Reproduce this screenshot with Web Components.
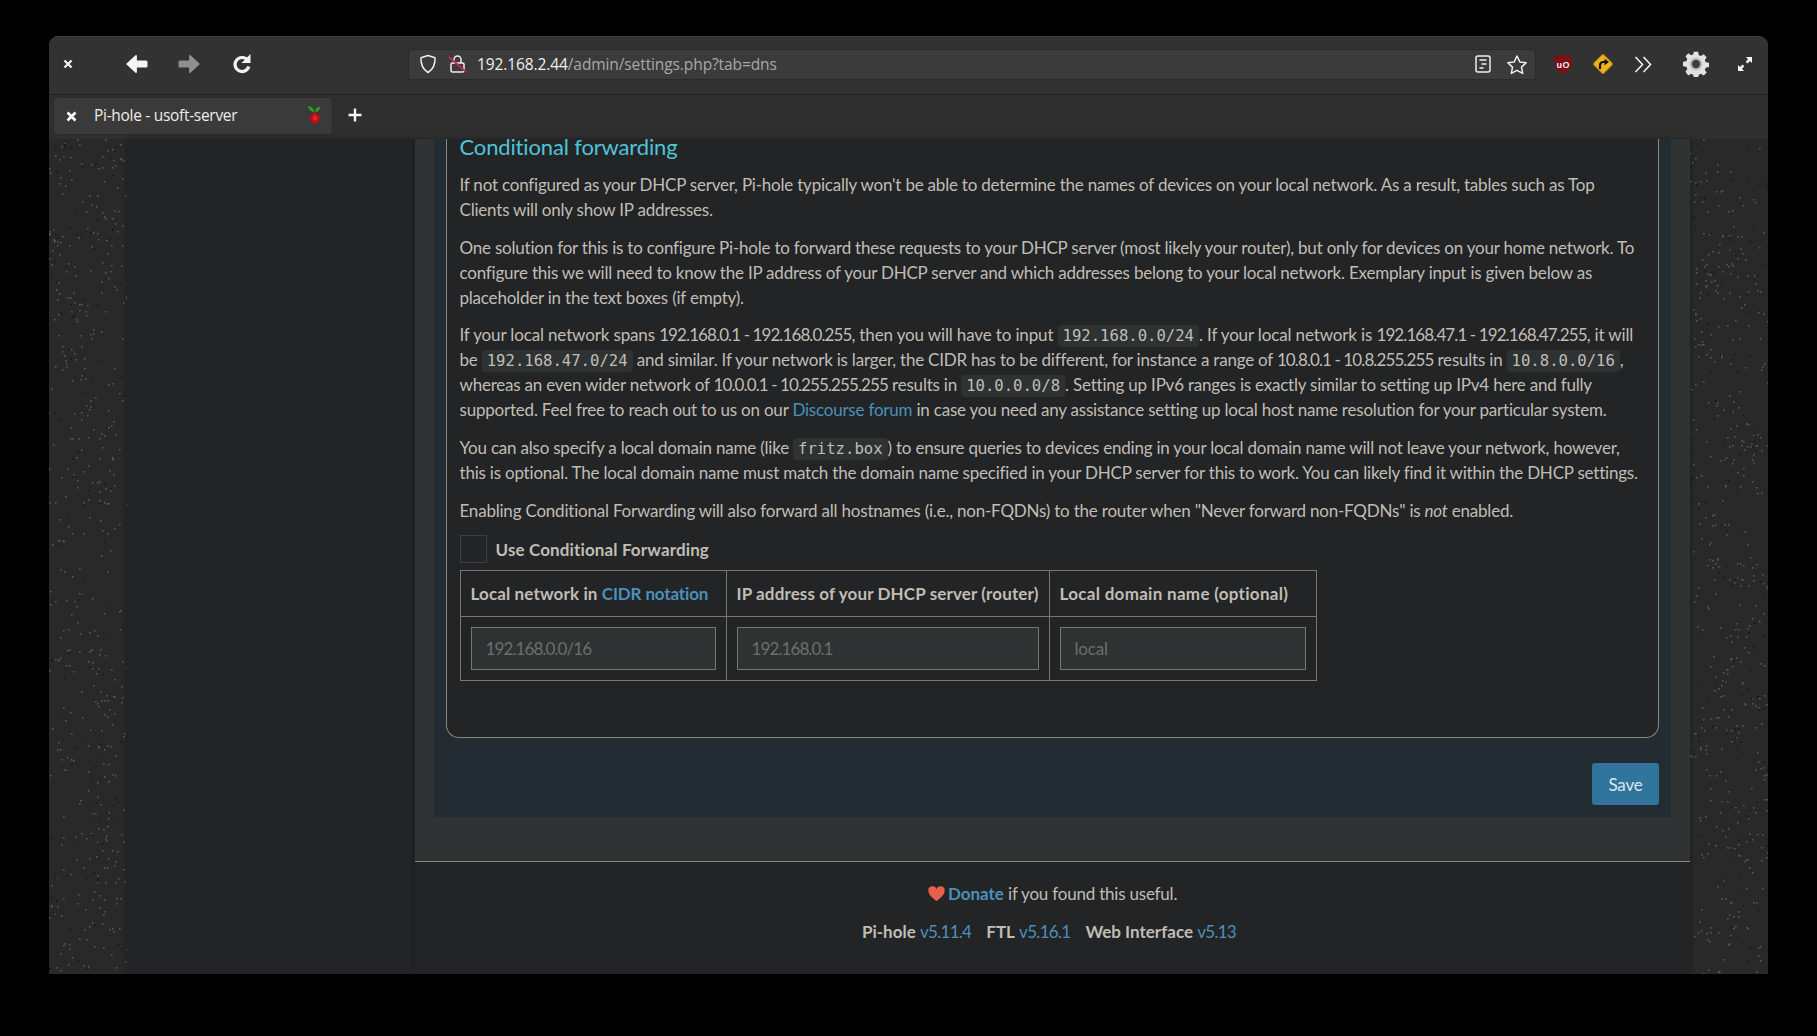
<!DOCTYPE html>
<html>
<head>
<meta charset="utf-8">
<title>Pi-hole - usoft-server</title>
<style>
  html, body { margin: 0; height: 100%; background: #000; overflow: hidden; }
  body { padding: 36px 49px 0; box-sizing: border-box; }
</style>
</head>
<body>
<browser-window>
  <browser-toolbar slot="toolbar" host="192.168.2.44" path="/admin/settings.php?tab=dns"></browser-toolbar>
  <browser-tabs slot="tabs" title="Pi-hole - usoft-server"></browser-tabs>
  <admin-page></admin-page>
</browser-window>

<template id="window-tpl">
  <style>
    :host { display: flex; flex-direction: column; width: 1719px; height: 938px; border-radius: 9px 9px 0 0; overflow: hidden; background: #232425; }
    .view { flex: 1; min-height: 0; display: flex; }
  </style>
  <slot name="toolbar"></slot>
  <slot name="tabs"></slot>
  <div class="view"><slot></slot></div>
</template>

<template id="toolbar-tpl">
  <style>
    :host { display: flex; align-items: center; flex: none; background: #323232; border-bottom: 1px solid #232323; border-top: 1px solid #3d3d3d; box-sizing: content-box; height: 54px; padding: 0 0 3px 14px; font: 15.5px "Open Sans", sans-serif; }
    svg { display: block; flex: none; }
    .url { width: 1128px; height: 31px; flex: none; display: flex; align-items: center; background: #3b3b3b; border: 1px solid #2a2a2a; border-radius: 4px; box-sizing: border-box; color: #a8a8a8; white-space: nowrap; }
    .url b { font-weight: 400; color: #f0f0f0; }
    .txt { flex: 1; letter-spacing: -.1px; }
  </style>
  <svg width="10" height="10" viewBox="0 0 10 10"><path d="M1.500 1.500l7 7M8.500 1.500l-7 7" stroke="#f2f2f2" stroke-width="2.200"/></svg>
  <svg width="23" height="20" viewBox="0 0 23 20" style="margin-left:52px"><path d="M1 10 10.500 1.200q1.200-.8 1.400.8V6.500H21q1.500 0 1.500 1.500v4q0 1.500-1.500 1.500H11.900V18q-.2 1.600-1.400.8Z" fill="#f4f4f4"/></svg>
  <svg width="23" height="20" viewBox="0 0 23 20" style="margin-left:30px"><path d="M22 10 12.500 1.200q-1.200-.8-1.400.8V6.500H2Q.5 6.500.5 8v4q0 1.500 1.500 1.500h9.100V18q.2 1.600 1.400.8Z" fill="#8f8f8f"/></svg>
  <svg width="20" height="20" viewBox="0 0 20 20" style="margin-left:31px"><path d="M15.600 6.200A7 7 0 1 0 16.800 12.500" fill="none" stroke="#f4f4f4" stroke-width="3.200"/><path d="M18.500 0v9h-9Z" fill="#f4f4f4"/></svg>
  <div class="url" style="margin-left:156px">
    <svg width="18" height="20" viewBox="0 0 18 20" style="margin-left:10px"><path d="M9 1.500 16 3.700c.3 6.500-1.600 11.500-7 14.800C3.600 15.200 1.700 10.200 2 3.700Z" fill="none" stroke="#eee" stroke-width="1.500" stroke-linejoin="round"/></svg>
    <svg width="19" height="20" viewBox="0 0 19 20" style="margin-left:11px"><path d="M6 9V5.500a3.500 3.500 0 0 1 7 0V9" fill="none" stroke="#eee" stroke-width="1.500"/><rect x="3" y="9" width="13" height="9" rx="1.500" fill="none" stroke="#eee" stroke-width="1.500"/><path d="M1 3 18 18" stroke="#c4294f" stroke-width="1.800"/></svg>
    <span class="txt" style="margin-left:10px"><b>192.168.2.44</b><span id="path"></span></span>
    <svg width="18" height="20" viewBox="0 0 18 20" style="margin-right:14px"><rect x="2" y="2" width="14" height="16" rx="2" fill="none" stroke="#eee" stroke-width="1.500"/><path d="M5.500 6h7M7.500 10h5M5.500 14h4" stroke="#eee" stroke-width="1.500"/></svg>
    <svg width="22" height="21" viewBox="0 0 22 21" style="margin-right:7px"><path d="M11 2l2.800 5.900 6.400.8-4.700 4.400 1.200 6.300L11 16.300l-5.700 3.100 1.200-6.300L1.800 8.700l6.400-.8Z" fill="none" stroke="#eee" stroke-width="1.500" stroke-linejoin="round"/></svg>
  </div>
  <svg width="20" height="21" viewBox="0 0 20 21" style="margin-left:17px"><path d="M10 .5 19 3c.3 8-2.500 14-9 17.500C3.500 17 .7 11 1 3Z" fill="#7c0f14"/><text x="10" y="13.500" text-anchor="middle" font-family="Liberation Sans" font-weight="700" font-size="9" fill="#f6eaea" textLength="13">uO</text></svg>
  <svg width="22" height="22" viewBox="0 0 22 22" style="margin-left:19px"><rect x="4" y="4" width="14" height="14" rx="1.500" transform="rotate(45 11 11)" fill="#eeb420" stroke="#b98a12"/><path d="M8 16v-3.500q0-3.500 3.500-3.500H13" fill="none" stroke="#141414" stroke-width="2.200"/><path d="M12.500 5.800 17 9l-4.500 3.200Z" fill="#141414"/></svg>
  <svg width="18" height="17" viewBox="0 0 18 17" style="margin-left:20px"><path d="M1.500 1l7 7.500-7 7.500M9.500 1l7 7.500-7 7.500" fill="none" stroke="#efefef" stroke-width="1.600"/></svg>
  <svg width="26" height="26" viewBox="0 0 28 28" style="margin-left:31px"><path d="M11.700 1h4.600l.7 3.600 2.300 1 3-2 3.200 3.200-2 3 1 2.300 3.600.7v4.600l-3.600.7-1 2.300 2 3-3.200 3.200-3-2-2.300 1-.7 3.600h-4.600l-.7-3.600-2.300-1-3 2L2.600 22.400l2-3-1-2.300L0 16.400v-4.600l3.600-.7 1-2.300-2-3L5.800 2.600l3 2 2.300-1Z" fill="#e2e2e2" transform="translate(0 -.1)"/><circle cx="14" cy="14" r="7" fill="#bdbdbd"/><circle cx="14" cy="14" r="4.500" fill="#3f3f3f"/></svg>
  <svg width="16" height="16" viewBox="0 0 16 16" style="margin-left:28px"><path d="M9 1h6v6l-2-2-2.500 2.500-1.800-1.800L11 3.200ZM7 15H1V9l2 2 2.500-2.500 1.800 1.800L5 12.800Z" fill="#f4f4f4"/></svg>
</template>

<template id="tabs-tpl">
  <style>
    :host { display: flex; align-items: center; flex: none; height: 44px; background: #2f2f2f; padding-left: 4px; box-sizing: border-box; font: 15.500px "Open Sans", sans-serif; }
    .tab { width: 280px; height: 38px; box-sizing: border-box; margin-bottom: 2px; display: flex; align-items: center; padding-left: 12px; background: #3a3a3a; border: 1px solid #2a2a2a; border-radius: 4px; color: #ececec; }
    .t { margin: 0 0 2px 17px; flex: 1; letter-spacing: -.3px; white-space: nowrap; }
    svg { display: block; flex: none; }
  </style>
  <div class="tab">
    <svg width="11" height="11" viewBox="0 0 11 11"><path d="M1.500 1.500l8 8M9.500 1.500l-8 8" stroke="#fff" stroke-width="2.600"/></svg>
    <span class="t" id="t"></span>
    <svg width="16" height="22" viewBox="0 0 16 22" style="margin:0 9px 2px 0"><path d="M7.500 8C6 3.500 3.500 2 1 2.200 2 5.500 4 8 7.500 8ZM8 8c.3-3 2-5 5-5.500C13 5.500 11.500 7.800 8 8Z" fill="#27a51f"/><path d="M8 7.500 14.500 14 8 21 1.500 14Z" fill="#b01217"/><path d="M8 10.500 11 14 8 17.500 5 14Z" fill="#ee1c25"/></svg>
  </div>
  <svg width="14" height="14" viewBox="0 0 14 14" style="margin:0 0 5px 15px"><path d="M7 .5v13M.5 7h13" stroke="#f4f4f4" stroke-width="2.400"/></svg>
</template>

<template id="page-tpl">
  <style>
    :host { display: flex; flex: 1; min-width: 0; height: 100%; color: #c0bdb6; font: 17.500px Lato, sans-serif; line-height: 25px; }
    .side { width: 288px; flex: none; background: #232425; box-shadow: 0 0 5px rgba(0,0,0,.35); z-index: 1; }
    .main { width: 1275px; flex: none; display: flex; flex-direction: column; box-shadow: 0 0 5px rgba(0,0,0,.35); z-index: 1; }
    .wrap { height: 723px; flex: none; background: #2f3333; box-sizing: border-box; padding: 0 19px; border-bottom: 1px solid #8c8778; }
    .box { height: 678px; background: #242c33; box-sizing: border-box; padding: 0 12px; }
  </style>
  <noise-strip seed="7"></noise-strip>
  <div class="side"></div>
  <div class="main">
    <div class="wrap">
      <div class="box">
        <forwarding-set></forwarding-set>
        <save-row>Save</save-row>
      </div>
    </div>
    <page-footer></page-footer>
  </div>
  <noise-strip seed="23"></noise-strip>
</template>

<template id="set-tpl">
  <style>
    :host { display: block; height: 599px; box-sizing: border-box; border: 1px solid #8c8778; border-top: 0; border-radius: 0 0 13px 13px; background: #232425; padding: 0 12px 0 12.500px; font-size: 17px; letter-spacing: -.21px; white-space: nowrap; }
    h4 { margin: 0 0 18.300px; font-size: 22px; line-height: 15px; font-weight: 400; color: #4fc3da; letter-spacing: -.15px; }
    p { margin: 0 0 12.500px; }
    p.last { margin-top: 13.200px; }
    a { color: #4a90bb; text-decoration: none; }
    .n { letter-spacing: -.9px; }
    .l1 { letter-spacing: -.14px; }
    code { font: 15.600px "DejaVu Sans Mono", monospace; letter-spacing: 0; background: #2e3233; color: #c0bdb6; border-radius: 4px; padding: 2px 5px; }
    .check { display: flex; align-items: center; gap: 9px; height: 28px; margin-top: 1px; font-weight: 700; letter-spacing: .13px; }
    .check i { display: block; width: 27px; height: 28px; box-sizing: border-box; border: 1px solid #3c4044; background: #232425; }
    table { border-collapse: collapse; margin-top: 6.300px; table-layout: fixed; width: 856px; font-weight: 700; letter-spacing: .13px; }
    td { border: 1px solid #7c7869; padding: 0 10px; box-sizing: border-box; }
    td a { letter-spacing: -.14px; }
    td.w { letter-spacing: .3px; }
    tr.h td { height: 46px; }
    tr.i td { height: 64px; }
    .inp { height: 43px; box-sizing: border-box; border: 1px solid #7c7869; background: #2e3233; color: #6f6f69; font-weight: 400; letter-spacing: -.21px; display: flex; align-items: center; padding-left: 14px; }
  </style>
  <h4>Conditional forwarding</h4>
  <p>If not configured as your DHCP server, Pi-hole typically won't be able to determine the names of devices on your local network. As a result, tables such as Top<br>Clients will only show IP addresses.</p>
  <p>One solution for this is to configure Pi-hole to forward these requests to your DHCP server (most likely your router), but only for devices on your home network. To<br>configure this we will need to know the IP address of your DHCP server and which addresses belong to your local network. Exemplary input is given below as<br>placeholder in the text boxes (if empty).</p>
  <p><span class="l1">If your local network spans <span class="n">192.168.0.1 - 192.168.0.255</span>, then you will have to input <code>192.168.0.0/24</code>. If your local network is <span class="n">192.168.47.1 - 192.168.47.255</span>, it will</span><br>be <code>192.168.47.0/24</code> and similar. If your network is larger, the CIDR has to be different, for instance a range of <span class="n">10.8.0.1 - 10.8.255.255</span> results in <code>10.8.0.0/16</code>,<br>whereas an even wider network of <span class="n">10.0.0.1 - 10.255.255.255</span> results in <code>10.0.0.0/8</code>. Setting up IPv6 ranges is exactly similar to setting up IPv4 here and fully<br>supported. Feel free to reach out to us on our <a>Discourse forum</a> in case you need any assistance setting up local host name resolution for your particular system.</p>
  <p>You can also specify a local domain name (like <code>fritz.box</code>) to ensure queries to devices ending in your local domain name will not leave your network, however,<br>this is optional. The local domain name must match the domain name specified in your DHCP server for this to work. You can likely find it within the DHCP settings.</p>
  <p class="last">Enabling Conditional Forwarding will also forward all hostnames (i.e., non-FQDNs) to the router when "Never forward non-FQDNs" is <em>not</em> enabled.</p>
  <div class="check"><i></i><span>Use Conditional Forwarding</span></div>
  <table>
    <colgroup><col style="width:266px"><col style="width:323px"><col style="width:267px"></colgroup>
    <tr class="h"><td>Local network in <a>CIDR notation</a></td><td>IP address of your DHCP server (router)</td><td class="w">Local domain name (optional)</td></tr>
    <tr class="i"><td><div class="inp"><span class="n">192.168.0.0/16</span></div></td><td><div class="inp"><span class="n">192.168.0.1</span></div></td><td><div class="inp">local</div></td></tr>
  </table>
</template>

<template id="save-tpl">
  <style>
    :host { display: flex; justify-content: flex-end; padding-top: 25px; }
    button { width: 67px; height: 42px; border: 0; border-radius: 3px; background: #31749b; color: #dce8ef; font: 17px Lato, sans-serif; letter-spacing: -.2px; padding: 0; }
  </style>
  <button><slot></slot></button>
</template>

<template id="footer-tpl">
  <style>
    :host { display: block; padding-top: 19px; text-align: center; background: #232425; flex: 1; font-size: 17px; letter-spacing: -.21px; }
    p { margin: 0 0 12.500px; }
    p.v { padding-right: 7px; }
    a { color: #4a90bb; text-decoration: none; }
    b { font-weight: 700; letter-spacing: 0; }
    .n { letter-spacing: -.7px; }
    .gap { margin-left: 15px; }
    svg { vertical-align: -2px; }
  </style>
  <p><svg width="17" height="16" viewBox="0 0 18 16" style="margin-right:-1px"><path d="M9 15.500C4 11.500.5 8.500.5 5A4.300 4.300 0 0 1 9 3.200 4.300 4.300 0 0 1 17.500 5C17.500 8.500 14 11.500 9 15.500Z" fill="#e8604c"/></svg> <a><b>Donate</b></a> if you found this useful.</p>
  <p class="v"><b>Pi-hole</b> <a class="n">v5.11.4</a><span class="gap"></span><b>FTL</b> <a class="n">v5.16.1</a><span class="gap"></span><b>Web Interface</b> <a class="n">v5.13</a></p>
</template>

<script>
  // every element just clones its own template into an open shadow root
  class TplElement extends HTMLElement {
    constructor() {
      super();
      this.attachShadow({mode: 'open'});
      this.shadowRoot.append(document.getElementById(this.constructor.tpl).content.cloneNode(true));
    }
  }
  class BrowserWindow extends TplElement { static tpl = 'window-tpl'; }
  class BrowserToolbar extends TplElement {
    static tpl = 'toolbar-tpl';
    connectedCallback() { this.shadowRoot.querySelector('#path').textContent = this.getAttribute('path'); }
  }
  class BrowserTabs extends TplElement {
    static tpl = 'tabs-tpl';
    connectedCallback() { this.shadowRoot.querySelector('#t').textContent = this.getAttribute('title'); }
  }
  class AdminPage extends TplElement { static tpl = 'page-tpl'; }
  class ForwardingSet extends TplElement { static tpl = 'set-tpl'; }
  class SaveRow extends TplElement { static tpl = 'save-tpl'; }
  class PageFooter extends TplElement { static tpl = 'footer-tpl'; }

  // speckled body background, drawn as little squares from a seeded generator
  class NoiseStrip extends HTMLElement {
    connectedCallback() {
      this.attachShadow({mode: 'open'});
      let s = +this.getAttribute('seed');
      const rnd = () => (s = (s * 16807) % 2147483647) / 2147483647;
      let dots = '';
      let cx = 0, cy = 0;
      for (let i = 0; i < 570; i++) {
        // every 6th dot picks a new clump, about half the dots fall near it
        if (i % 6 == 0) { cx = rnd() * 78; cy = rnd() * 835; }
        const near = rnd() < .5;
        const x = near ? cx + (rnd() - .5) * 22 : rnd() * 78;
        const y = near ? cy + (rnd() - .5) * 22 : rnd() * 835;
        const dark = rnd() < .25;
        dots += `<rect x="${Math.floor(x)}" y="${Math.floor(y)}" width="1.6" height="1.6" fill="${dark ? '#171717' : '#565656'}"/>`;
      }
      this.shadowRoot.innerHTML = `<style>:host{display:block;width:78px;flex:none;background:#292929;overflow:hidden}svg{display:block}</style><svg width="78" height="835">${dots}</svg>`;
    }
  }
  customElements.define('browser-window', BrowserWindow);
  customElements.define('browser-toolbar', BrowserToolbar);
  customElements.define('browser-tabs', BrowserTabs);
  customElements.define('admin-page', AdminPage);
  customElements.define('forwarding-set', ForwardingSet);
  customElements.define('save-row', SaveRow);
  customElements.define('page-footer', PageFooter);
  customElements.define('noise-strip', NoiseStrip);
</script>
</body>
</html>
